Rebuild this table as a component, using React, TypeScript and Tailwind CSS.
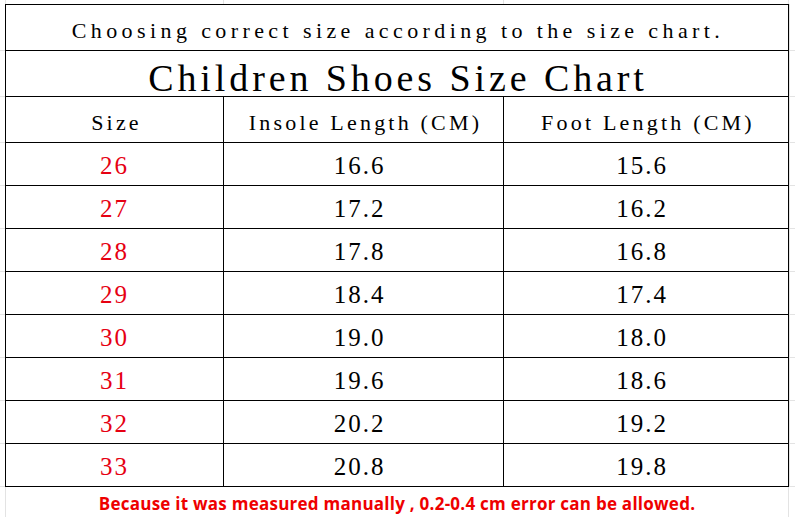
import React from "react"

const rows = [
  { size: "26", insole: "16.6", foot: "15.6" },
  { size: "27", insole: "17.2", foot: "16.2" },
  { size: "28", insole: "17.8", foot: "16.8" },
  { size: "29", insole: "18.4", foot: "17.4" },
  { size: "30", insole: "19.0", foot: "18.0" },
  { size: "31", insole: "19.6", foot: "18.6" },
  { size: "32", insole: "20.2", foot: "19.2" },
  { size: "33", insole: "20.8", foot: "19.8" },
]

// faint spreadsheet gridlines around the printed table
function Gutter({ className }: { className: string }) {
  return (
    <div className={className}>
      <div className="h-[47px] border-b border-[#e3e3e3]" />
      <div className="h-[46px] border-b border-[#e3e3e3]" />
      <div className="h-[46px] border-b border-[#e3e3e3]" />
      {rows.map((r) => (
        <div key={r.size} className="h-[43px] border-b border-[#e3e3e3]" />
      ))}
    </div>
  )
}

function SizeChart() {
  return (
    <div className="w-[795px] h-[517px] bg-white overflow-hidden flex flex-col font-['Liberation_Serif',serif] text-black">
      <div className="flex h-[4px] pl-[5px]">
        <div className="w-[218px] border-l border-[#e3e3e3]" />
        <div className="w-[280px] border-l border-[#e3e3e3]" />
        <div className="w-[285px] border-l border-[#e3e3e3]" />
        <div className="flex-1 border-l border-[#e3e3e3]" />
      </div>

      <div className="flex">
        <Gutter className="w-[5px] flex flex-col" />

        <div className="w-[784px] border-l border-t border-black flex flex-col">
          <div className="h-[46px] border-b border-r border-black flex items-center justify-center pt-[6px] text-[22px] tracking-[4.4px] pl-[2px]">
            Choosing correct size according to the size chart.
          </div>
          <div className="h-[46px] border-b border-r border-black flex items-center justify-center pt-[9px] text-[38px] tracking-[3.9px] pl-[2px]">
            Children Shoes Size Chart
          </div>
          <div className="h-[46px] flex text-[22px] tracking-[3.2px]">
            <div className="w-[218px] border-b border-r border-black flex items-center justify-center pt-[6px] pl-[4px]">
              Size
            </div>
            <div className="w-[280px] border-b border-r border-black flex items-center justify-center pt-[6px] pl-[4px]">
              Insole Length (CM)
            </div>
            <div className="w-[285px] border-b border-r border-black flex items-center justify-center pt-[6px] pl-[4px]">
              Foot Length (CM)
            </div>
          </div>

          {rows.map((r) => (
            <div key={r.size} className="h-[43px] flex text-[25px] tracking-[2px]">
              <div className="w-[218px] border-b border-r border-black flex items-center justify-center pt-[3px] text-[#e60012]">
                {r.size}
              </div>
              <div className="w-[280px] border-b border-r border-black flex items-center justify-center pt-[3px] pr-[8px]">
                {r.insole}
              </div>
              <div className="w-[285px] border-b border-r border-black flex items-center justify-center pt-[3px] pr-[8px]">
                {r.foot}
              </div>
            </div>
          ))}
        </div>

        <Gutter className="flex-1 flex flex-col border-l border-[#e3e3e3]" />
      </div>

      <div className="flex-1 ml-[5px] w-[784px] border-x border-[#e3e3e3] flex items-center justify-center pt-[4px] font-['Open_Sans',sans-serif] font-bold text-[17px] tracking-[0.25px] text-[#ee0000]">
        Because it was measured manually , 0.2-0.4 cm error can be allowed.
      </div>
    </div>
  )
}

export default SizeChart
